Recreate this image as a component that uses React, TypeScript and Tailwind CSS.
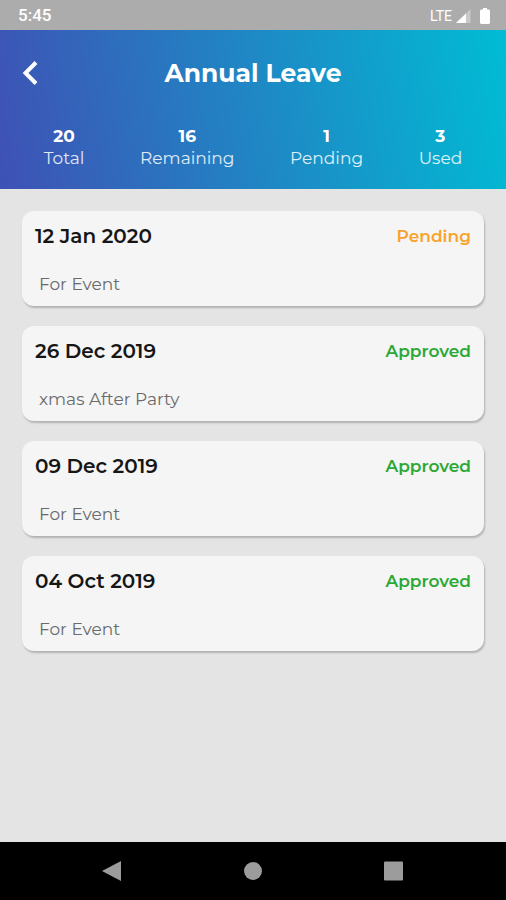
import clsx from 'clsx'

type Status = 'Pending' | 'Approved'

interface Leave {
  date: string
  status: Status
  reason: string
}

const stats = [
  { value: 20, label: 'Total' },
  { value: 16, label: 'Remaining' },
  { value: 1, label: 'Pending' },
  { value: 3, label: 'Used' },
]

const leaves: Leave[] = [
  { date: '12 Jan 2020', status: 'Pending', reason: 'For Event' },
  { date: '26 Dec 2019', status: 'Approved', reason: 'xmas After Party' },
  { date: '09 Dec 2019', status: 'Approved', reason: 'For Event' },
  { date: '04 Oct 2019', status: 'Approved', reason: 'For Event' },
]

function StatusBar() {
  return (
    <div className="flex h-[30px] items-center justify-between bg-[#acacac] pl-[18px] pr-4 pt-0.5 font-['Roboto',sans-serif] text-white">
      <span className="text-[17px] font-medium">5:45</span>
      <div className="flex items-center">
        <span className="text-sm">LTE</span>
        <svg className="ml-1 h-4 w-4" viewBox="0 0 16 16" fill="currentColor" aria-hidden="true">
          <path d="M14.5 1v14H0z" opacity="0.35" />
          <path d="M10 5.5V15H0z" />
        </svg>
        <svg className="ml-2 h-4 w-2.5" viewBox="0 0 10 16" fill="currentColor" aria-hidden="true">
          <path d="M3 0h4v1.500h2l1 1v12.500l-1 1H1l-1-1V2.500l1-1h2z" />
        </svg>
      </div>
    </div>
  )
}

function Header() {
  return (
    <header className="bg-[linear-gradient(80deg,#3f51b5,#00bcd4)] pb-5 text-white">
      <div className="grid grid-cols-[60px_1fr_60px] items-center pt-6">
        <button type="button" aria-label="Back" className="flex justify-center">
          <svg className="h-6 w-4" viewBox="0 0 16 24" fill="none" stroke="currentColor" strokeWidth="4" aria-hidden="true">
            <path d="M14 1.500 3.500 12 14 22.500" />
          </svg>
        </button>
        <h1 className="text-center text-[25px] leading-[38px] font-bold">Annual Leave</h1>
      </div>
      <dl className="flex justify-around px-4 pt-[33px]">
        {stats.map(s => (
          <div key={s.label} className="flex flex-col-reverse items-center text-[17px] leading-[22px]">
            <dt className="text-white/85">{s.label}</dt>
            <dd className="font-bold">{s.value}</dd>
          </div>
        ))}
      </dl>
    </header>
  )
}

function LeaveCard({ leave }: { leave: Leave }) {
  return (
    <li className="rounded-xl bg-[#f5f5f5] px-[13px] pt-[13px] pb-2.5 shadow-[1px_2px_2px_rgba(0,0,0,0.22)]">
      <div className="flex items-center justify-between">
        <h2 className="text-xl leading-6 font-semibold text-[#161616]">{leave.date}</h2>
        <span
          className={clsx(
            'text-[17px] leading-6 font-semibold',
            leave.status === 'Pending' ? 'text-[#f9a32b]' : 'text-[#2ba836]'
          )}
        >
          {leave.status}
        </span>
      </div>
      <p className="mt-6 px-1 text-[17px] leading-6 text-[#6a6a6a]">{leave.reason}</p>
    </li>
  )
}

function NavBar() {
  return (
    <nav className="flex h-[58px] items-center justify-around bg-black px-[42px] text-[#9c9c9c]">
      <button type="button" aria-label="Back">
        <svg className="h-5 w-5" viewBox="0 0 20 20" fill="currentColor" aria-hidden="true">
          <path d="M19 0v20L0 10z" />
        </svg>
      </button>
      <button type="button" aria-label="Home">
        <svg className="h-5 w-5" viewBox="0 0 20 20" fill="currentColor" aria-hidden="true">
          <circle cx="10" cy="10" r="9" />
        </svg>
      </button>
      <button type="button" aria-label="Recent apps">
        <svg className="h-5 w-5" viewBox="0 0 20 20" fill="currentColor" aria-hidden="true">
          <rect x="0" y="0.5" width="19" height="19" rx="1" />
        </svg>
      </button>
    </nav>
  )
}

export default function App() {
  return (
    <div className="flex min-h-screen flex-col bg-[#e4e4e4] font-['Montserrat','Inter',sans-serif]">
      <StatusBar />
      <Header />
      <main className="flex-1 px-[22px] py-[22px]">
        <ul className="flex flex-col gap-5">
          {leaves.map(l => (
            <LeaveCard key={l.date} leave={l} />
          ))}
        </ul>
      </main>
      <NavBar />
    </div>
  )
}
